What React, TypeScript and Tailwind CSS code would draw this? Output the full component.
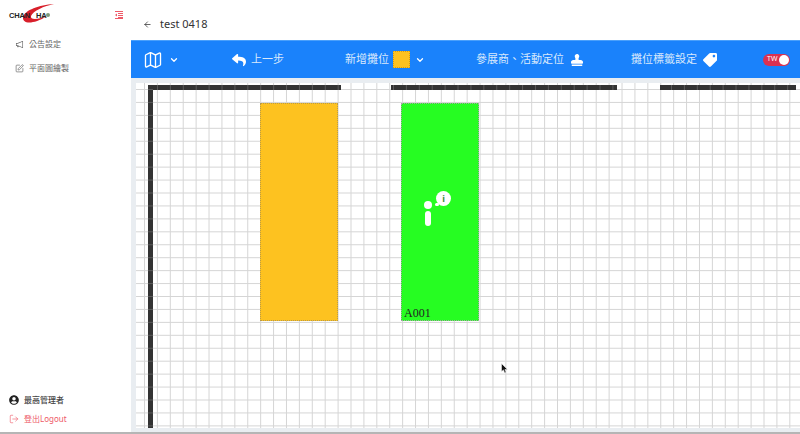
import React from "react";
import { ArrowLeft, ChevronDown, Map, SquarePen, LogOut } from "lucide-react";
import { AiOutlineNotification } from "react-icons/ai";
import { FaReply, FaStamp, FaTag, FaUserCircle } from "react-icons/fa";

const font = "font-['Noto_Sans','Noto_Sans_CJK_TC',sans-serif]";

function Logo() {
  return (
    <div className="relative w-[48px] h-[24px]">
      <svg width="48" height="24" viewBox="0 0 48 24" className="absolute left-0 top-0">
        <path d="M45 1 C30 2 16 7 14 14 C13 21 24 22 38 13 C28 17 21 17 22 13 C24 8 35 3 45 1 Z" fill="#d81f2a" />
      </svg>
      <span className="absolute left-0 top-[8px] text-[7.5px] leading-[9px] font-bold text-[#222] font-['Liberation_Sans',sans-serif] tracking-[-0.2px]">CHAN</span>
      <span className="absolute left-[27px] top-[8px] text-[7.5px] leading-[9px] font-bold text-[#222] font-['Liberation_Sans',sans-serif] tracking-[-0.2px]">HA</span>
      <span className="absolute left-[37px] top-[10px] w-[4px] h-[4px] rounded-full bg-[#7d9a7a]" />
    </div>
  );
}

function NavItem({ icon, label }: { icon: React.ReactNode; label: string }) {
  return (
    <div className="flex items-center h-[24px] pl-[15px] gap-[5px] text-[#666] text-[8px]">
      {icon}
      <span>{label}</span>
    </div>
  );
}

function Sidebar() {
  return (
    <aside className="w-[131px] shrink-0 flex flex-col bg-white">
      <div className="h-[30px] pl-[9px] pr-[8px] flex items-center justify-between">
        <Logo />
        <svg width="8" height="8" viewBox="0 0 8 8">
          <path d="M0 .5h8M3 2.5h5M3 4.5h5M3 6.5h5M0 7.5h8" stroke="#ee5a68" strokeWidth="1" fill="none" />
          <path d="M2 2.5v3L0 4z" fill="#ee5a68" />
        </svg>
      </div>
      <nav className="mt-[2px] flex flex-col">
        <NavItem icon={<AiOutlineNotification size={9} />} label="公告設定" />
        <NavItem icon={<SquarePen size={9} strokeWidth={1.8} />} label="平面圖繪製" />
      </nav>
      <div className="mt-auto pl-[9px] pb-[7px] flex flex-col gap-[7px] text-[8px]">
        <div className="flex items-center gap-[5px] text-[#444] font-medium h-[12px]">
          <FaUserCircle size={10} className="text-[#222]" />
          <span>最高管理者</span>
        </div>
        <div className="flex items-center gap-[5px] text-[#ee5a68] h-[12px]">
          <LogOut size={10} strokeWidth={1.5} />
          <span>登出Logout</span>
        </div>
      </div>
    </aside>
  );
}

function Toolbar() {
  return (
    <div className="h-[38px] shrink-0 whitespace-nowrap bg-[#1a82fb] border-t border-[#4aa0fb] flex items-center pl-[12px] text-[#d9e9fb] text-[11px]">
      <div className="flex items-center text-white">
        <Map size={20} strokeWidth={1.6} />
        <ChevronDown size={10} strokeWidth={3} className="ml-[6px]" />
      </div>
      <div className="flex items-center ml-[53px]">
        <FaReply size={14} className="text-white" />
        <span className="ml-[5px]">上一步</span>
      </div>
      <div className="flex items-center ml-[61px]">
        <span>新增攤位</span>
        <span className="ml-[4px] w-[17px] h-[17px] bg-[#fdc220] border border-dotted border-[#d59a10]" />
        <ChevronDown size={10} strokeWidth={3} className="ml-[5px] text-white" />
      </div>
      <div className="flex items-center ml-[51px]">
        <span>參展商、活動定位</span>
        <FaStamp size={12} className="ml-[7px] text-white" />
      </div>
      <div className="flex items-center ml-[48px]">
        <span>攤位標籤設定</span>
        <FaTag size={14} className="ml-[6px] text-white scale-x-[-1]" />
      </div>
      <div className="ml-[46px] w-[27px] h-[12px] rounded-full bg-[#dc3150] relative flex items-center pl-[4px] text-[7px] text-white">
        TW
        <span className="absolute right-[1px] top-[1px] w-[10px] h-[10px] rounded-full bg-white" />
      </div>
    </div>
  );
}

const wall = "absolute bg-[#333] bg-[linear-gradient(to_right,#5a5a5a_1px,transparent_1px)] bg-[size:12.92px_100%]";

function Canvas() {
  return (
    <div className="relative flex-1 ml-[5px] mt-[5px] mb-[4px] overflow-hidden bg-white bg-[linear-gradient(to_right,#d5d5d5_1px,transparent_1px),linear-gradient(to_bottom,#d5d5d5_1px,transparent_1px)] bg-[size:12.92px_12.95px] bg-[position:8px_6px]">
      {/* walls */}
      <div className={`${wall} bg-[position:9px_0] left-[12px] top-[2px] w-[193px] h-[5px]`} />
      <div className={`${wall} bg-[position:2px_0] left-[255px] top-[2px] w-[226px] h-[5px]`} />
      <div className={`${wall} bg-[position:11px_0] left-[524px] top-[2px] w-[136px] h-[5px]`} />
      <div className="absolute left-[12px] top-[2px] w-[5px] h-[343px] bg-[#333] bg-[linear-gradient(to_bottom,#5a5a5a_1px,transparent_1px)] bg-[size:100%_12.95px] bg-[position:0_4px]" />
      {/* booths */}
      <div className="absolute left-[124px] top-[20px] w-[78px] h-[218px] bg-[#fdc220] border border-dotted border-[#b99a4a]" />
      <div className="absolute left-[265px] top-[20px] w-[78px] h-[218px] bg-[#26fd22] border border-dotted border-[#a5a5a5]">
        <span className="absolute left-[2px] bottom-0 text-[12px] leading-[14px] text-[#222] font-['Liberation_Serif',serif]">A001</span>
        <span className="absolute left-[22px] top-[97px] w-[8px] h-[8px] rounded-full bg-white" />
        <span className="absolute left-[23px] top-[107px] w-[6px] h-[15px] rounded-full bg-white" />
        <span className="absolute left-[34px] top-[87px] w-[15px] h-[15px] rounded-full bg-white flex items-center justify-center text-[9px] font-bold text-[#3c8f3a] leading-none">i</span>
        <span className="absolute left-[33px] top-[99px] w-[4px] h-[3px] rounded-full bg-white" />
      </div>
      {/* mouse pointer */}
      <svg width="7" height="11" viewBox="0 0 7 11" className="absolute left-[365px] top-[280px]">
        <path d="M.5.5v8l2-1.6 1.2 3 1.4-.6-1.2-2.8h2.6z" fill="#111" stroke="#fff" strokeWidth=".5" />
      </svg>
    </div>
  );
}

export default function App() {
  return (
    <div className={`w-[800px] h-[434px] overflow-hidden flex bg-white border-b-2 border-[#b5b5b5] ${font}`}>
      <Sidebar />
      <main className="flex-1 min-w-0 flex flex-col">
        <header className="h-[40px] shrink-0 flex items-center pt-[9px] pl-[12px] gap-[8px] text-[#333] text-[11px]">
          <ArrowLeft size={9} strokeWidth={2} />
          <span>test 0418</span>
        </header>
        <Toolbar />
        <div className="flex-1 min-h-0 flex bg-[#e9edf1]">
          <Canvas />
        </div>
      </main>
    </div>
  );
}
